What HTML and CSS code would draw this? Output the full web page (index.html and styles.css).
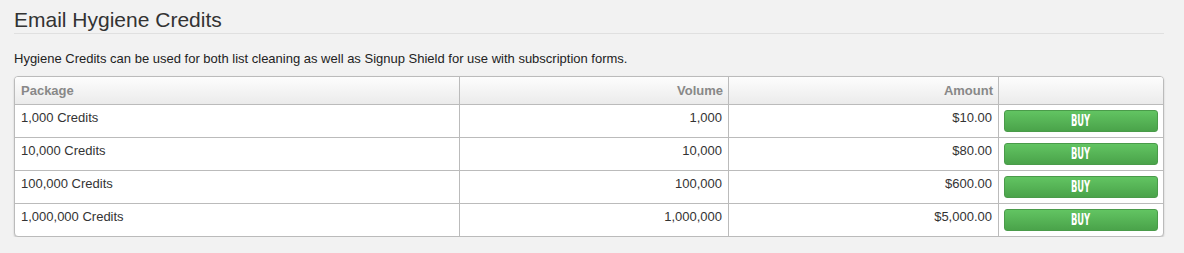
FILE: index.html
```html
<!DOCTYPE html>
<html lang="en">

<head>
    <meta charset="UTF-8">
    <title>Email Hygiene Credits</title>
    <link rel="stylesheet" href="styles.css">
</head>

<body>
    <div class="page">
        <h2 class="page-title">Email Hygiene Credits</h2>

        <p class="intro">Hygiene Credits can be used for both list cleaning as well as Signup Shield for use with subscription forms.</p>

        <div class="table-box">
            <table class="credits">
                <thead>
                    <tr>
                        <th class="col-package">Package</th>
                        <th class="col-volume num">Volume</th>
                        <th class="col-amount num">Amount</th>
                        <th class="col-action"></th>
                    </tr>
                </thead>
                <tbody>
                    <tr>
                        <td>1,000 Credits</td>
                        <td class="num">1,000</td>
                        <td class="num">$10.00</td>
                        <td class="action"><button class="btn-buy"><span>BUY</span></button></td>
                    </tr>
                    <tr>
                        <td>10,000 Credits</td>
                        <td class="num">10,000</td>
                        <td class="num">$80.00</td>
                        <td class="action"><button class="btn-buy"><span>BUY</span></button></td>
                    </tr>
                    <tr>
                        <td>100,000 Credits</td>
                        <td class="num">100,000</td>
                        <td class="num">$600.00</td>
                        <td class="action"><button class="btn-buy"><span>BUY</span></button></td>
                    </tr>
                    <tr>
                        <td>1,000,000 Credits</td>
                        <td class="num">1,000,000</td>
                        <td class="num">$5,000.00</td>
                        <td class="action"><button class="btn-buy"><span>BUY</span></button></td>
                    </tr>
                </tbody>
            </table>
        </div>
    </div>
</body>

</html>
```

FILE: styles.css
```css
body,
html {
    margin: 0;
    padding: 0;
    background: #f2f2f2;
    font-family: Arial, "Liberation Sans", sans-serif;
    color: #333;
}

.page {
    width: 1150px;
    padding: 0 0 0 14px;
}

.page-title {
    margin: 0;
    padding: 8px 0 1px;
    font-size: 21px;
    line-height: 24px;
    font-weight: normal;
    color: #333;
    border-bottom: 1px solid #e0e0e0;
}

.intro {
    margin: 17px 0 9px;
    font-size: 13px;
    line-height: 16px;
    color: #222;
}

.table-box {
    border: 1px solid #bbb;
    border-radius: 4px;
    background: #fff;
    box-shadow: 0 1px 2px rgba(0, 0, 0, 0.18);
    overflow: hidden;
}

.credits {
    width: 100%;
    table-layout: fixed;
    border-collapse: separate;
    border-spacing: 0;
    font-size: 13px;
}

.credits th,
.credits td {
    box-sizing: border-box;
    border-right: 1px solid #bbb;
    text-align: left;
}

.credits th:last-child,
.credits td:last-child {
    border-right: none;
}

.credits th {
    height: 28px;
    padding: 0 5px 0 6px;
    font-weight: bold;
    color: #888;
    background: linear-gradient(#fdfdfd, #ebebeb);
    border-bottom: 1px solid #bbb;
}

.col-package { width: 445px; }
.col-volume { width: 269px; }
.col-amount { width: 270px; }
.col-action { width: 164px; }

.credits td {
    padding: 4px 6px 0;
    line-height: 18px;
    vertical-align: top;
    border-top: 1px solid #bbb;
}

.credits tbody tr:first-child td {
    border-top: none;
}

.credits .num {
    text-align: right;
}

.credits td.action {
    padding: 5px;
}

.btn-buy {
    display: block;
    width: 100%;
    height: 22px;
    padding: 0;
    border: 1px solid #4a9b4a;
    border-radius: 3px;
    background: linear-gradient(#62c462, #4aa34a);
    color: #fff;
    font-family: "DejaVu Sans Condensed", "DejaVu Sans", sans-serif;
    font-weight: bold;
    font-size: 15px;
    line-height: 20px;
    cursor: pointer;
}

.btn-buy span {
    display: inline-block;
    transform: scaleX(0.62);
}
```
